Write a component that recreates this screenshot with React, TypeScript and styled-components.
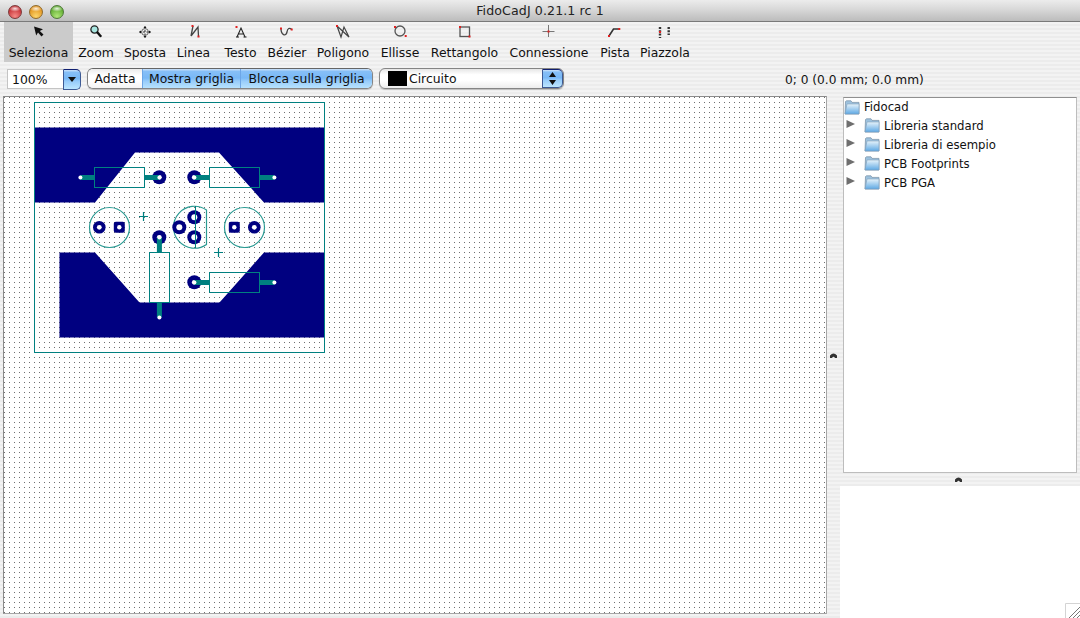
import styled, { createGlobalStyle } from "styled-components";

const GlobalStyle = createGlobalStyle`
  html, body {
    margin: 0;
    padding: 0;
    width: 1080px;
    height: 618px;
    overflow: hidden;
    background: #efefef;
  }
  * { box-sizing: border-box; }
`;

const FONT = `"DejaVu Sans", "Liberation Sans", sans-serif`;
const STRIPES = `repeating-linear-gradient(#ececec 0, #ececec 2px, #f3f3f3 2px, #f3f3f3 4px)`;
const AQUA = `linear-gradient(#cfe4fa 0, #86bff7 12%, #79b8f6 45%, #97ccfa 60%, #bce6ff 100%)`;

const Window = styled.div`
  width: 1080px;
  height: 618px;
  display: flex;
  flex-direction: column;
  font-family: ${FONT};
  color: #111;
  background: ${STRIPES};
  position: relative;
  overflow: hidden;
`;

const TitleBar = styled.div`
  height: 22px;
  flex: none;
  position: relative;
  display: flex;
  align-items: center;
  justify-content: center;
  background: linear-gradient(#ececec, #d8d8d8 45%, #bcbcbc);
  border-bottom: 1px solid #7a7a7a;
`;

const Lights = styled.div`
  position: absolute;
  left: 8px;
  top: 5px;
  display: flex;
  gap: 7px;
`;

const Light = styled.span<{ $hue: string; $rim: string; $glow: string }>`
  width: 14px;
  height: 14px;
  border-radius: 50%;
  border: 1px solid ${(p) => p.$rim};
  background:
    radial-gradient(ellipse 6px 3px at 50% 22%, rgba(255, 255, 255, 0.85), transparent),
    radial-gradient(circle at 50% 85%, ${(p) => p.$glow}, ${(p) => p.$hue} 75%);
`;

const Title = styled.div`
  font-size: 12.6px;
  color: #222;
  letter-spacing: 0.1px;
`;

const ToolBar = styled.div`
  height: 41px;
  flex: none;
  display: flex;
  padding-left: 4px;
`;

const ToolButton = styled.div<{ $width: number; $active?: boolean }>`
  width: ${(p) => p.$width}px;
  height: 40px;
  flex: none;
  display: flex;
  flex-direction: column;
  align-items: center;
  background: ${(p) => (p.$active ? "#cbcbcb" : "transparent")};
`;

const IconSlot = styled.svg`
  width: 16px;
  height: 16px;
  margin-top: 2px;
  flex: none;
`;

const ToolLabel = styled.span`
  font-size: 12.4px;
  line-height: 16px;
  margin-top: 5px;
  white-space: nowrap;
`;

const OptionsBar = styled.div`
  height: 33px;
  flex: none;
  display: flex;
  align-items: flex-start;
  padding: 5px 0 0 7px;
`;

const ZoomCombo = styled.div`
  width: 74px;
  height: 21px;
  margin-top: 1px;
  display: flex;
  flex: none;
`;

const ZoomValue = styled.div`
  width: 56px;
  height: 20px;
  background: #fff;
  border: 1px solid #c4c4c4;
  border-right: none;
  font-size: 12.4px;
  line-height: 19px;
  padding-left: 4px;
`;

const ComboArrow = styled.div<{ $width: number }>`
  width: ${(p) => p.$width}px;
  flex: none;
  height: 100%;
  background: ${AQUA};
  border: 1px solid #3d5a94;
  border-top-color: #101f70;
  border-radius: 0 5px 5px 0;
  display: flex;
  align-items: center;
  justify-content: center;
`;

const Segments = styled.div`
  margin-left: 6px;
  width: 286px;
  height: 21px;
  display: flex;
  flex: none;
  border-radius: 6px;
  overflow: hidden;
  border: 1px solid #858585;
  border-top-color: #666;
  box-shadow: 0 1px 1px rgba(0, 0, 0, 0.2);
`;

const Segment = styled.div<{ $width: number; $on?: boolean }>`
  width: ${(p) => p.$width}px;
  flex: none;
  text-align: center;
  font-size: 12.4px;
  line-height: 19px;
  background: ${(p) => (p.$on ? AQUA : "linear-gradient(#ececec, #fff 30%, #fff 55%, #f0f0f0)")};
  border-top: ${(p) => (p.$on ? "1px solid #101f70" : "none")};
  border-left: ${(p) => (p.$on ? "1px solid #6da6e6" : "none")};
  margin-top: ${(p) => (p.$on ? "-1px" : "0")};
  height: 21px;
`;

const ColorCombo = styled.div`
  margin-left: 6px;
  width: 185px;
  height: 21px;
  flex: none;
  display: flex;
  border-radius: 6px;
  border: 1px solid #858585;
  background: linear-gradient(#e6e6e6, #fff 30%, #fff 60%, #ededed);
  box-shadow: 0 1px 1px rgba(0, 0, 0, 0.2);
`;

const Swatch = styled.span`
  width: 19px;
  height: 15px;
  margin: 2px 0 0 8px;
  background: #000;
  flex: none;
`;

const ColorName = styled.span`
  flex: 1;
  font-size: 12.4px;
  line-height: 19px;
  padding-left: 2px;
`;

const Status = styled.div`
  margin-left: 221px;
  margin-top: 1px;
  font-size: 12.2px;
  line-height: 22px;
  white-space: nowrap;
`;

const Main = styled.div`
  flex: 1;
  display: flex;
  min-height: 0;
`;

const Canvas = styled.div`
  width: 824px;
  height: 518px;
  flex: none;
  margin-left: 3px;
  position: relative;
  border: 1px solid #a6a6a6;
  border-top-color: #8a8a8a;
  border-left-color: #8a8a8a;
  background-color: #fff;
  background-image: conic-gradient(from 270deg at 1px 1px, #6f6f6f 90deg, #fff 0);
  background-size: 5px 5px;
  overflow: hidden;
`;

const Board = styled.svg`
  position: absolute;
  left: 0;
  top: 0;
`;

const VerticalDivider = styled.div`
  width: 13px;
  flex: none;
  display: flex;
  justify-content: center;
  padding-top: 257px;
`;

const SidePanel = styled.div`
  flex: 1;
  display: flex;
  flex-direction: column;
`;

const TreeFrame = styled.div`
  width: 234px;
  height: 376px;
  flex: none;
  margin: 1px 0 0 3px;
  background: #fff;
  border: 1px solid #bdbdbd;
  border-top-color: #8f8f8f;
  display: flex;
  flex-direction: column;
`;

const TreeRow = styled.div<{ $child?: boolean }>`
  height: ${(p) => (p.$child ? "19px" : "18px")};
  flex: none;
  display: flex;
  align-items: center;
  padding-left: ${(p) => (p.$child ? "2px" : "0")};
`;

const Disclosure = styled.svg`
  width: 9px;
  height: 8px;
  flex: none;
  margin-right: 9px;
  margin-top: -4px;
`;

const FolderIcon = styled.svg`
  width: 16px;
  height: 15px;
  flex: none;
  margin-right: 4px;
`;

const TreeLabel = styled.span`
  font-size: 11.7px;
  white-space: nowrap;
`;

const HorizontalDivider = styled.div`
  height: 13px;
  flex: none;
  display: flex;
  justify-content: center;
  align-items: center;
  padding-right: 4px;
`;

const Preview = styled.div`
  flex: 1;
  background: #fff;
`;

const Grip = styled.svg`
  width: 7px;
  height: 5px;
  flex: none;
`;

const ResizeGrip = styled.svg`
  position: absolute;
  right: 0;
  bottom: 0;
  width: 15px;
  height: 15px;
`;

const RED = "#e02020";

// dark stroke + red control points, the way FidoCadJ draws its tools
const Handle = ({ x, y }: { x: number; y: number }) => (
  <rect x={x - 1} y={y - 1} width="2" height="2" fill={RED} />
);

const tools = [
  {
    label: "Seleziona",
    width: 69,
    icon: <path d="M3 2.5 L5.2 11.5 L7 8.5 L10.5 12.5 L12.5 10.5 L8.8 7 L12 5.2 Z" fill="#111" />,
  },
  {
    label: "Zoom",
    width: 46,
    icon: (
      <>
        <circle cx="6.5" cy="5.5" r="3.6" fill="#a8e6e0" stroke="#222" strokeWidth="1.3" />
        <path d="M9.5 8.5 L12.5 12" stroke="#111" strokeWidth="2.4" strokeLinecap="round" />
      </>
    ),
  },
  {
    label: "Sposta",
    width: 52,
    icon: (
      <>
        <circle cx="8" cy="8" r="3.4" fill="none" stroke="#666" />
        <path d="M8 2.5 L8 13.5 M2.5 8 L13.5 8" stroke="#333" strokeDasharray="2 1.5" />
        <path d="M8 2 L6.5 4 L9.5 4 Z M8 14 L6.5 12 L9.5 12 Z M2 8 L4 6.5 L4 9.5 Z M14 8 L12 6.5 L12 9.5 Z" fill="#111" />
      </>
    ),
  },
  {
    label: "Linea",
    width: 45,
    icon: (
      <>
        <path d="M5 12 L7 2 M5 12 L12 3 L12.5 12.5" stroke="#444" strokeWidth="1.3" fill="none" />
        <Handle x={6.5} y={2} />
        <Handle x={12.5} y={12.5} />
      </>
    ),
  },
  {
    label: "Testo",
    width: 49,
    icon: (
      <>
        <path d="M4 13 L8 4 L12 13 M5.5 10 L10.5 10" stroke="#222" strokeWidth="1.1" fill="none" />
        <path d="M3 13 L6 13 M10.5 13 L13.5 13" stroke="#222" />
        <Handle x={3.5} y={3} />
      </>
    ),
  },
  {
    label: "Bézier",
    width: 44,
    icon: (
      <>
        <path d="M2 4.5 C2 11 7 13 8 8 C8.5 4 10.5 3.5 12.7 5.5" stroke="#444" strokeWidth="1.3" fill="none" />
        <Handle x={2} y={4.5} />
        <Handle x={12.7} y={5.5} />
      </>
    ),
  },
  {
    label: "Poligono",
    width: 68,
    icon: (
      <>
        <path d="M2 2 L6 13 L9 3 L14 13 Z" stroke="#444" strokeWidth="1.2" fill="none" />
        <Handle x={2} y={2} />
      </>
    ),
  },
  {
    label: "Ellisse",
    width: 46,
    icon: (
      <>
        <circle cx="8" cy="7" r="5" fill="none" stroke="#555" strokeWidth="1.3" />
        <Handle x={3} y={3} />
        <Handle x={13.7} y={12} />
      </>
    ),
  },
  {
    label: "Rettangolo",
    width: 83,
    icon: (
      <>
        <rect x="3" y="3" width="9.5" height="9.5" fill="none" stroke="#555" strokeWidth="1.3" />
        <Handle x={3} y={3} />
        <Handle x={12.5} y={12.5} />
      </>
    ),
  },
  {
    label: "Connessione",
    width: 86,
    icon: (
      <>
        <path d="M7.5 1 L7.5 13 M1.5 7.5 L13.5 7.5" stroke="#777" fill="none" />
        <Handle x={7.5} y={7.5} />
      </>
    ),
  },
  {
    label: "Pista",
    width: 46,
    icon: (
      <>
        <path d="M2 12 L6.5 5 L12.3 5" stroke="#333" strokeWidth="1.6" fill="none" />
        <Handle x={2} y={12} />
        <Handle x={12.3} y={5} />
      </>
    ),
  },
  {
    label: "Piazzola",
    width: 54,
    icon: (
      <>
        <path d="M3 3 L3 14" stroke="#333" strokeWidth="2.4" strokeDasharray="2 1.3" fill="none" />
        <path d="M11.7 3 L11.7 11" stroke="#333" strokeWidth="2.4" strokeDasharray="2 1.3" fill="none" />
        <Handle x={3} y={8} />
      </>
    ),
  },
];

const TEAL = "#008080";
const NAVY = "#000080";
const RING = "#2a9a92";

const Pad = ({ x, y, r = 7, hole = 2.4 }: { x: number; y: number; r?: number; hole?: number }) => (
  <>
    <circle cx={x + 0.3} cy={y + 0.3} r={r} fill={NAVY} />
    <circle cx={x + 0.3} cy={y + 0.3} r={hole} fill="#fff" />
  </>
);

const SquarePad = ({ x, y }: { x: number; y: number }) => (
  <>
    <rect x={x - 5.2} y={y - 5.2} width="11" height="11" rx="2" fill={NAVY} />
    <circle cx={x + 0.3} cy={y + 0.3} r="2.2" fill="#fff" />
  </>
);

const Lead = ({ d }: { d: string }) => (
  <path d={d} stroke={TEAL} strokeWidth="5" fill="none" transform="translate(0.4 0.4)" />
);

const Dot = ({ x, y }: { x: number; y: number }) => <circle cx={x + 0.4} cy={y + 0.4} r="2" fill="#fff" />;

const Body = ({ x, y, w, h }: { x: number; y: number; w: number; h: number }) => (
  <rect x={x + 0.5} y={y + 0.5} width={w} height={h} fill="none" stroke={TEAL} />
);

const Cross = ({ x, y }: { x: number; y: number }) => (
  <path
    d={`M${x - 4} ${y + 0.5} L${x + 5} ${y + 0.5} M${x + 0.5} ${y - 4} L${x + 0.5} ${y + 5}`}
    stroke={TEAL}
    strokeWidth="1.2"
    fill="none"
  />
);

const Pcb = () => (
  <Board width="330" height="262" viewBox="4 97 330 262">
    <path
      d="M34 127.5 L324.5 127.5 L324.5 202.5 L264 202.5 L219 152.5 L135 152.5 L95 202.5 L34 202.5 Z"
      fill={NAVY}
    />
    <path
      d="M59.5 252.5 L95 252.5 L139.5 302.5 L219.5 302.5 L264 252.5 L324.5 252.5 L324.5 337.5 L59.5 337.5 Z"
      fill={NAVY}
    />
    <rect x="34.5" y="102.5" width="290" height="250" fill="none" stroke={TEAL} />

    <Pad x={159} y={177} />
    <Pad x={194} y={177} />
    <Pad x={194} y={282} />
    <Pad x={159} y={237} />
    <Lead d="M80 177 L94 177 M144 177 L159 177" />
    <Lead d="M194 177 L209 177 M259 177 L274 177" />
    <Lead d="M194 282 L209 282 M259 282 L274 282" />
    <Lead d="M159 237 L159 252 M159 302 L159 317" />
    <Body x={94} y={167} w={50} h={20} />
    <Body x={209} y={167} w={50} h={20} />
    <Body x={209} y={272} w={50} h={20} />
    <Body x={149} y={252} w={20} h={50} />
    <Dot x={80} y={177} />
    <Dot x={159} y={177} />
    <Dot x={194} y={177} />
    <Dot x={274} y={177} />
    <Dot x={194} y={282} />
    <Dot x={274} y={282} />
    <Dot x={159} y={237} />
    <Dot x={159} y={317} />

    <circle cx="109.5" cy="227.5" r="20" fill="none" stroke={RING} strokeWidth="1.2" />
    <Pad x={99} y={227} r={6.3} />
    <SquarePad x={119} y={227} />
    <circle cx="244.5" cy="227.5" r="20" fill="none" stroke={RING} strokeWidth="1.2" />
    <SquarePad x={234} y={227} />
    <Pad x={254} y={227} r={6.3} />

    <path d="M206.5 210 A21 21 0 1 0 206.5 244.5 Z" fill="none" stroke={RING} strokeWidth="1.2" />
    <Pad x={179} y={227} hole={3} />
    <Pad x={194} y={217} hole={3} />
    <Pad x={194} y={237} hole={3} />
    <path d="M195.5 206 L195.5 248" stroke={TEAL} fill="none" />

    <Cross x={143} y={216} />
    <Cross x={218} y={252} />
  </Board>
);

const Folder = () => (
  <FolderIcon viewBox="0 0 16 15">
    <defs>
      <linearGradient id="folderFill" x1="0" y1="0" x2="0" y2="1">
        <stop offset="0" stopColor="#e6f3fb" />
        <stop offset="1" stopColor="#5fa9e4" />
      </linearGradient>
    </defs>
    <path d="M2.5 0.8 L7 0.8 L8 2.4 L15 2.4 L15 14 L1 14 L1.5 1.5 Z" fill="#9dc2de" stroke="#7f97ac" strokeWidth="0.8" />
    <path d="M3 4 L15 4 L15 14 L1 14 Z" fill="url(#folderFill)" stroke="#7f9db8" strokeWidth="0.6" />
  </FolderIcon>
);

const treeItems = ["Libreria standard", "Libreria di esempio", "PCB Footprints", "PCB PGA"];

const GripMark = () => (
  <Grip viewBox="0 0 7 5">
    <path d="M0 5 L0 2.5 Q3.5 -1.5 7 2.5 L7 5 L5 5 Q3.5 2.5 2 5 Z" fill="#333" />
  </Grip>
);

const App = () => {
  return (
    <Window>
      <GlobalStyle />
      <TitleBar>
        <Lights>
          <Light $hue="#c22a30" $rim="#7c3a3a" $glow="#f58a86" />
          <Light $hue="#e0901a" $rim="#8f6a2c" $glow="#fcd56c" />
          <Light $hue="#5aa82c" $rim="#4f7a38" $glow="#b0e678" />
        </Lights>
        <Title>FidoCadJ 0.21.1 rc 1</Title>
      </TitleBar>

      <ToolBar>
        {tools.map((tool, i) => (
          <ToolButton key={tool.label} $width={tool.width} $active={i === 0}>
            <IconSlot viewBox="0 0 16 16">{tool.icon}</IconSlot>
            <ToolLabel>{tool.label}</ToolLabel>
          </ToolButton>
        ))}
      </ToolBar>

      <OptionsBar>
        <ZoomCombo>
          <ZoomValue>100%</ZoomValue>
          <ComboArrow $width={18}>
            <svg width="8" height="5" viewBox="0 0 8 5">
              <path d="M0 0 L8 0 L4 5 Z" fill="#111" />
            </svg>
          </ComboArrow>
        </ZoomCombo>
        <Segments>
          <Segment $width={54}>Adatta</Segment>
          <Segment $on $width={98}>Mostra griglia</Segment>
          <Segment $on $width={132}>Blocca sulla griglia</Segment>
        </Segments>
        <ColorCombo>
          <Swatch />
          <ColorName>Circuito</ColorName>
          <ComboArrow $width={21}>
            <svg width="7" height="13" viewBox="0 0 7 13">
              <path d="M0 5 L7 5 L3.5 0 Z M0 8 L7 8 L3.5 13 Z" fill="#111" />
            </svg>
          </ComboArrow>
        </ColorCombo>
        <Status>0; 0 (0.0 mm; 0.0 mm)</Status>
      </OptionsBar>

      <Main>
        <Canvas>
          <Pcb />
        </Canvas>
        <VerticalDivider>
          <GripMark />
        </VerticalDivider>
        <SidePanel>
          <TreeFrame>
            <TreeRow>
              <Folder />
              <TreeLabel>Fidocad</TreeLabel>
            </TreeRow>
            {treeItems.map((item) => (
              <TreeRow key={item} $child>
                <Disclosure viewBox="0 0 9 8">
                  <path d="M0.5 0 L9 4 L0.5 8 Z" fill="#6e6e6e" />
                </Disclosure>
                <Folder />
                <TreeLabel>{item}</TreeLabel>
              </TreeRow>
            ))}
          </TreeFrame>
          <HorizontalDivider>
            <GripMark />
          </HorizontalDivider>
          <Preview />
        </SidePanel>
      </Main>

      <ResizeGrip viewBox="0 0 15 15">
        <path d="M0.5 15 L0.5 0.5 L15 0.5" fill="none" stroke="#d4d4d4" />
        <path d="M4 15 L15 4 M8 15 L15 8 M12 15 L15 12" stroke="#777" fill="none" />
      </ResizeGrip>
    </Window>
  );
};

export default App;
